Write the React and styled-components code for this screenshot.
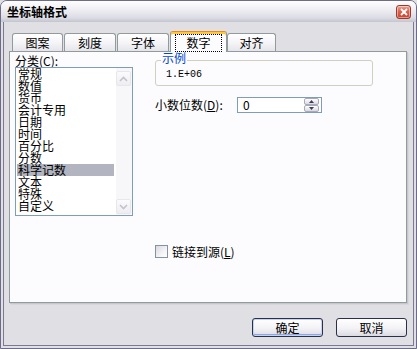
import React from "react";
import styled, { createGlobalStyle, css } from "styled-components";

const CJK = `"Noto Sans CJK SC", "Noto Sans", sans-serif`;

const GlobalStyle = createGlobalStyle`
  html, body { margin: 0; padding: 0; background: #e0dfe3; }
  body { font-family: ${CJK}; font-size: 12px; color: #000; }
  *, *::before, *::after { box-sizing: border-box; }
`;

const Window = styled.div`
  width: 417px;
  height: 349px;
  border: 1px solid #6c6c88;
  border-radius: 7px 7px 0 0;
  background: #e0dfe3;
  display: flex;
  flex-direction: column;
  overflow: hidden;
  font-family: ${CJK};
  font-size: 12px;
  line-height: 12px;
`;

const TitleBar = styled.div`
  flex: none;
  height: 21px;
  display: flex;
  align-items: center;
  justify-content: space-between;
  padding: 0 5px 0 6px;
  background: linear-gradient(#fefeff 0%, #efeff3 40%, #dcdce4 80%, #c4c4d0 100%);
`;

const Title = styled.span`
  font-weight: 700;
  font-size: 12px;
  line-height: 12px;
`;

const CloseButton = styled.div`
  width: 15px;
  height: 14px;
  border-radius: 3px;
  border: 1px solid #9a3a2c;
  background: linear-gradient(#eea597 0%, #d9634f 45%, #c8432d 100%);
  box-shadow: inset 0 0 0 1px rgba(255, 255, 255, 0.45);
  display: flex;
  align-items: center;
  justify-content: center;
`;

const Frame = styled.div`
  flex: 1;
  margin: 0 2px 2px;
  border: 1px solid #7a7a94;
  border-top: none;
  display: flex;
  flex-direction: column;
  padding: 9px 6px 0 5px;
  min-height: 0;
`;

const TabStrip = styled.div`
  flex: none;
  height: 20px;
  display: flex;
  align-items: flex-end;
  gap: 1px;
  padding-left: 3px;
`;

const Tab = styled.div`
  position: relative;
  width: ${(p) => p.$w}px;
  height: 18px;
  border: 1px solid #919b9c;
  border-bottom: none;
  border-radius: 3px 3px 0 0;
  background: linear-gradient(#ffffff 0%, #f4f4f7 55%, #e4e4ea 100%);
  display: flex;
  align-items: center;
  justify-content: center;
  padding-top: 1px;
  ${(p) =>
    p.$active &&
    css`
      z-index: 2;
      height: 21px;
      margin-bottom: -1px;
      margin-right: -1px;
      padding-top: 1px;
      border-top: 1px solid #e68b2c;
      background: #fcfcfe;
      box-shadow: inset 0 2px 0 #ffc83c;
    `}
`;

const FocusLabel = styled.span`
  outline: 1px dotted #000;
  outline-offset: 0;
  padding: 2px 10px;
`;

const Panel = styled.div`
  position: relative;
  z-index: 1;
  flex: 1;
  border: 1px solid #919b9c;
  background: #fcfcfe;
  box-shadow: 1px 1px 0 #c6c6ce, 2px 2px 0 #d6d6dc;
  display: grid;
  grid-template-columns: 118px 218px;
  column-gap: 22px;
  align-items: start;
  padding-left: 5px;
`;

const LeftCol = styled.div`
  padding-top: 3px;
  display: flex;
  flex-direction: column;
`;

const FieldLabel = styled.div`
  height: 12px;
  line-height: 12px;
  white-space: nowrap;
  width: ${(p) => (p.$w ? `${p.$w}px` : "auto")};
  flex: none;
`;

const ListBox = styled.div`
  width: 118px;
  height: 149px;
  border: 1px solid #7f9db9;
  background: #fff;
  display: flex;
`;

const Items = styled.div`
  flex: 1;
  padding: 0 2px 0 1px;
  display: flex;
  flex-direction: column;
`;

const Item = styled.div`
  height: 12px;
  line-height: 12px;
  padding-left: 1px;
  white-space: nowrap;
  background: ${(p) => (p.$selected ? "#b2b4bf" : "transparent")};
`;

const ScrollBar = styled.div`
  width: 16px;
  flex: none;
  background: #f7f7f9;
  display: flex;
  flex-direction: column;
  justify-content: space-between;
  padding: 3px 1px 1px 0;
`;

const ScrollButton = styled.div`
  height: 15px;
  border: 1px solid #e6e6ec;
  border-radius: 2px;
  background: linear-gradient(#fbfbfc, #eeeef2);
  display: flex;
  align-items: center;
  justify-content: center;
`;

const RightCol = styled.div`
  display: flex;
  flex-direction: column;
`;

const GroupBox = styled.fieldset`
  margin: 0;
  width: 218px;
  padding: 0 8px 4px 10px;
  border: 1px solid #d0d0bf;
  border-radius: 3px;
`;

const Legend = styled.legend`
  margin-left: -5px;
  padding: 0 1px 5px;
  line-height: 12px;
  color: #0046d5;
`;

const Sample = styled.div`
  font-family: "Liberation Mono", monospace;
  font-size: 10px;
  height: 12px;
  line-height: 12px;
`;

const SpinRow = styled.div`
  margin-top: 11px;
  height: 16px;
  display: flex;
  align-items: center;
`;

const SpinBox = styled.div`
  width: 85px;
  height: 16px;
  border: 1px solid #7f9db9;
  background: #fff;
  display: flex;
  align-items: center;
  padding-left: 5px;
  padding-right: 2px;
`;

const SpinValue = styled.span`
  flex: 1;
  line-height: 12px;
`;

const SpinButtons = styled.div`
  width: 15px;
  height: 14px;
  display: flex;
  flex-direction: column;
`;

const SpinButton = styled.div`
  flex: 1;
  border: 1px solid #a9a9b8;
  border-radius: 2px;
  background: linear-gradient(#ffffff, #d9d9e2);
  display: flex;
  align-items: center;
  justify-content: center;
`;

const CheckRow = styled.div`
  margin-top: 132px;
  height: 13px;
  display: flex;
  align-items: center;
  gap: 4px;
`;

const CheckBox = styled.div`
  width: 13px;
  height: 13px;
  border: 1px solid #8592a6;
  background: linear-gradient(135deg, #d8d8df 0%, #f4f4f6 60%, #ffffff 100%);
`;

const Footer = styled.div`
  flex: none;
  display: flex;
  justify-content: flex-end;
  gap: 13px;
  margin-top: 15px;
  padding-bottom: 8px;
`;

const Button = styled.div`
  width: 71px;
  height: 19px;
  border: 1px solid #2a2f4a;
  border-radius: 3px;
  background: linear-gradient(#ffffff 0%, #f3f3f6 55%, #dadae2 100%);
  display: flex;
  align-items: center;
  justify-content: center;
  ${(p) =>
    p.$default &&
    css`
      box-shadow: inset 0 0 0 1px #c4d3f3, inset 0 -1px 0 1px #8ba8e2;
    `}
`;

const Chevron = ({ up }) => (
  <svg width="9" height="6" viewBox="0 0 9 6">
    <path
      d={up ? "M1 5 L4.5 1.5 L8 5" : "M1 1 L4.5 4.5 L8 1"}
      fill="none"
      stroke="#c3c3cc"
      strokeWidth="1.6"
    />
  </svg>
);

const Triangle = ({ up }) => (
  <svg width="5" height="3" viewBox="0 0 5 3">
    <path d={up ? "M0 3 L2.5 0 L5 3 Z" : "M0 0 L2.5 3 L5 0 Z"} fill="#3c3c58" />
  </svg>
);

const categories = [
  "常规",
  "数值",
  "货币",
  "会计专用",
  "日期",
  "时间",
  "百分比",
  "分数",
  "科学记数",
  "文本",
  "特殊",
  "自定义",
];

const tabs = [
  { label: "图案", w: 51 },
  { label: "刻度", w: 52 },
  { label: "字体", w: 52 },
  { label: "数字", w: 57, active: true },
  { label: "对齐", w: 49 },
];

export default function App() {
  return (
    <>
      <GlobalStyle />
      <Window>
        <TitleBar>
          <Title>坐标轴格式</Title>
          <CloseButton>
            <svg width="8" height="8" viewBox="0 0 8 8">
              <path d="M1 1 L7 7 M7 1 L1 7" stroke="#fff" strokeWidth="1.8" />
            </svg>
          </CloseButton>
        </TitleBar>
        <Frame>
          <TabStrip>
            {tabs.map((t) => (
              <Tab key={t.label} $w={t.w} $active={t.active}>
                {t.active ? <FocusLabel>{t.label}</FocusLabel> : t.label}
              </Tab>
            ))}
          </TabStrip>
          <Panel>
            <LeftCol>
              <FieldLabel>
                分类(<u>C</u>):
              </FieldLabel>
              <ListBox>
                <Items>
                  {categories.map((c) => (
                    <Item key={c} $selected={c === "科学记数"}>
                      {c}
                    </Item>
                  ))}
                </Items>
                <ScrollBar>
                  <ScrollButton>
                    <Chevron up />
                  </ScrollButton>
                  <ScrollButton>
                    <Chevron />
                  </ScrollButton>
                </ScrollBar>
              </ListBox>
            </LeftCol>
            <RightCol>
              <GroupBox>
                <Legend>示例</Legend>
                <Sample>1.E+06</Sample>
              </GroupBox>
              <SpinRow>
                <FieldLabel $w={82}>
                  小数位数(<u>D</u>):
                </FieldLabel>
                <SpinBox>
                  <SpinValue>0</SpinValue>
                  <SpinButtons>
                    <SpinButton>
                      <Triangle up />
                    </SpinButton>
                    <SpinButton>
                      <Triangle />
                    </SpinButton>
                  </SpinButtons>
                </SpinBox>
              </SpinRow>
              <CheckRow>
                <CheckBox />
                <FieldLabel>
                  链接到源(<u>L</u>)
                </FieldLabel>
              </CheckRow>
            </RightCol>
          </Panel>
          <Footer>
            <Button $default>确定</Button>
            <Button>取消</Button>
          </Footer>
        </Frame>
      </Window>
    </>
  );
}
